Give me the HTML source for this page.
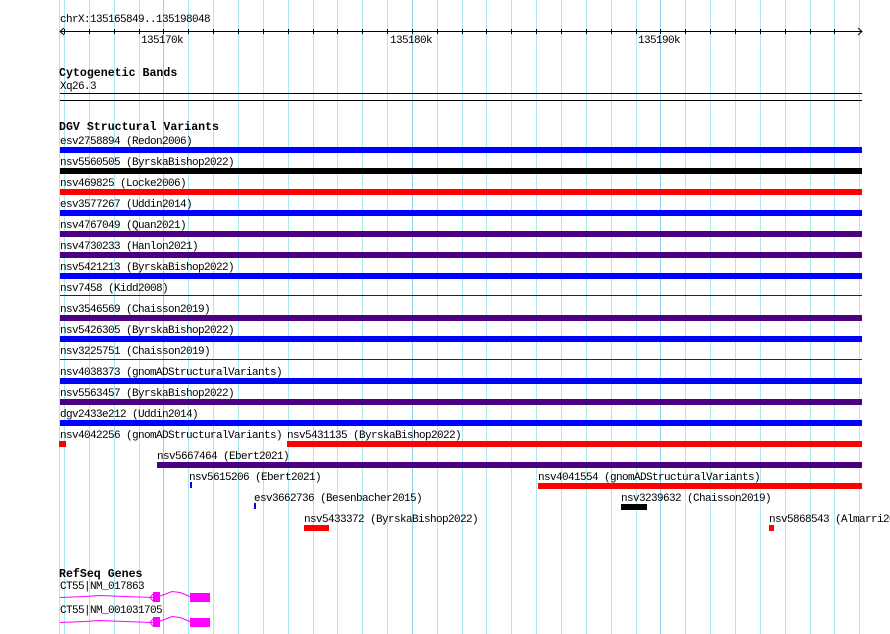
<!DOCTYPE html>
<html><head><meta charset="utf-8"><style>
body{margin:0;width:890px;height:634px;background:#fff;position:relative;overflow:hidden;font-family:"Liberation Mono","DejaVu Sans Mono",monospace;}
.t{position:absolute;font-size:11px;letter-spacing:-0.6px;line-height:10px;white-space:pre;color:#000;}
.b{position:absolute;font-size:11.6px;line-height:12px;font-weight:bold;white-space:pre;}
.g{position:absolute;top:0;height:634px;width:1px;background:#aee8ef;}
.gd{background:#8fd0ee;}
.r{position:absolute;height:6px;}
.bl{background:#0000ff}.pu{background:#4b0082}.rd{background:#ff0000}.bk{background:#000}
</style></head><body>
<div class="g" style="left:59px"></div>
<script>
for(let i=0;i<33;i++){const x=Math.round(64+i*24.85);if(x>862)break;const d=document.createElement('div');d.className='g'+((i%10==4)?' gd':'');d.style.left=x+'px';document.body.appendChild(d);}
</script>
<svg style="position:absolute;left:0;top:0" width="890" height="60">
<line x1="60" y1="31.5" x2="862" y2="31.5" stroke="#000"/>
<polyline points="64,28 60,31.5 64,35" fill="none" stroke="#000"/>
<polyline points="858,28 862,31.5 858,35" fill="none" stroke="#000"/>
<g stroke="#000" id="tk"></g>
</svg>
<script>
const tk=document.getElementById('tk');for(let i=0;i<33;i++){const x=Math.round(64+i*24.85)+0.5;if(x>858)break;const l=document.createElementNS('http://www.w3.org/2000/svg','line');l.setAttribute('x1',x);l.setAttribute('x2',x);l.setAttribute('y1',29);l.setAttribute('y2',34);tk.appendChild(l);}
</script>
<div class="t" style="left:60px;top:15px">chrX:135165849..135198048</div>
<div class="t" style="left:141px;top:36px">135170k</div>
<div class="t" style="left:390px;top:36px">135180k</div>
<div class="t" style="left:638px;top:36px">135190k</div>
<div class="b" style="left:59px;top:68px">Cytogenetic Bands</div>
<div class="t" style="left:60px;top:82px">Xq26.3</div>
<div class="bk" style="position:absolute;left:60px;top:93px;width:802px;height:1px"></div>
<div class="bk" style="position:absolute;left:60px;top:100px;width:802px;height:1px"></div>
<div class="b" style="left:59px;top:122px">DGV Structural Variants</div>

<div class="t" style="left:60px;top:137px">esv2758894 (Redon2006)</div><div class="r bl" style="left:60px;top:147px;width:802px"></div>
<div class="t" style="left:60px;top:158px">nsv5560505 (ByrskaBishop2022)</div><div class="r bk" style="left:60px;top:168px;width:802px"></div>
<div class="t" style="left:60px;top:179px">nsv469825 (Locke2006)</div><div class="r rd" style="left:60px;top:189px;width:802px"></div>
<div class="t" style="left:60px;top:200px">esv3577267 (Uddin2014)</div><div class="r bl" style="left:60px;top:210px;width:802px"></div>
<div class="t" style="left:60px;top:221px">nsv4767049 (Quan2021)</div><div class="r pu" style="left:60px;top:231px;width:802px"></div>
<div class="t" style="left:60px;top:242px">nsv4730233 (Hanlon2021)</div><div class="r pu" style="left:60px;top:252px;width:802px"></div>
<div class="t" style="left:60px;top:263px">nsv5421213 (ByrskaBishop2022)</div><div class="r bl" style="left:60px;top:273px;width:802px"></div>
<div class="t" style="left:60px;top:284px">nsv7458 (Kidd2008)</div><div class="pu" style="position:absolute;left:60px;top:295px;width:802px;height:1px"></div>
<div class="t" style="left:60px;top:305px">nsv3546569 (Chaisson2019)</div><div class="r pu" style="left:60px;top:315px;width:802px"></div>
<div class="t" style="left:60px;top:326px">nsv5426305 (ByrskaBishop2022)</div><div class="r bl" style="left:60px;top:336px;width:802px"></div>
<div class="t" style="left:60px;top:347px">nsv3225751 (Chaisson2019)</div><div style="position:absolute;left:60px;top:359px;width:802px;height:1px;background:#1e1a98"></div>
<div class="t" style="left:60px;top:368px">nsv4038373 (gnomADStructuralVariants)</div><div class="r bl" style="left:60px;top:378px;width:802px"></div>
<div class="t" style="left:60px;top:389px">nsv5563457 (ByrskaBishop2022)</div><div class="r pu" style="left:60px;top:399px;width:802px"></div>
<div class="t" style="left:60px;top:410px">dgv2433e212 (Uddin2014)</div><div class="r bl" style="left:60px;top:420px;width:802px"></div>
<div class="t" style="left:60px;top:431px">nsv4042256 (gnomADStructuralVariants)</div><div class="r rd" style="left:59px;top:441px;width:7px"></div>
<div class="t" style="left:287px;top:431px">nsv5431135 (ByrskaBishop2022)</div><div class="r rd" style="left:287px;top:441px;width:575px"></div>
<div class="t" style="left:157px;top:452px">nsv5667464 (Ebert2021)</div><div class="r pu" style="left:157px;top:462px;width:705px"></div>
<div class="t" style="left:189px;top:473px">nsv5615206 (Ebert2021)</div><div class="r bl" style="left:190px;top:482px;width:2px"></div>
<div class="t" style="left:538px;top:473px">nsv4041554 (gnomADStructuralVariants)</div><div class="r rd" style="left:538px;top:483px;width:324px"></div>
<div class="t" style="left:254px;top:494px">esv3662736 (Besenbacher2015)</div><div class="r bl" style="left:254px;top:503px;width:2px"></div>
<div class="t" style="left:621px;top:494px">nsv3239632 (Chaisson2019)</div><div class="r bk" style="left:621px;top:504px;width:26px"></div>
<div class="t" style="left:304px;top:515px">nsv5433372 (ByrskaBishop2022)</div><div class="r rd" style="left:304px;top:525px;width:25px"></div>
<div class="t" style="left:769px;top:515px">nsv5868543 (Almarri2020)</div><div class="r rd" style="left:769px;top:525px;width:5px"></div>

<div class="b" style="left:59px;top:569px">RefSeq Genes</div>
<div class="t" style="left:60px;top:582px">CT55|NM_017863</div>
<div class="t" style="left:60px;top:606px">CT55|NM_001031705</div>
<svg style="position:absolute;left:0;top:585px" width="890" height="49">
<g fill="none" stroke="#ff00ff">
<polyline points="60,12.5 85,11.5 100,10.5 125,11.5 153,12.5"/>
<polyline points="153,9 150,12.5 153,16"/>
<polyline points="159,11.5 172,6.5 180,7.5 190,11.5"/>
<polyline points="60,37.5 85,36.5 100,35.5 125,36.5 153,37.5"/>
<polyline points="153,34 150,37.5 153,41"/>
<polyline points="159,36.5 172,31.5 180,32.5 190,36.5"/>
</g>
<g fill="#ff00ff">
<rect x="153" y="7" width="7" height="10"/><rect x="190" y="8" width="20" height="9"/>
<rect x="153" y="32" width="7" height="10"/><rect x="190" y="33" width="20" height="9"/>
</g>
</svg>
</body></html>
